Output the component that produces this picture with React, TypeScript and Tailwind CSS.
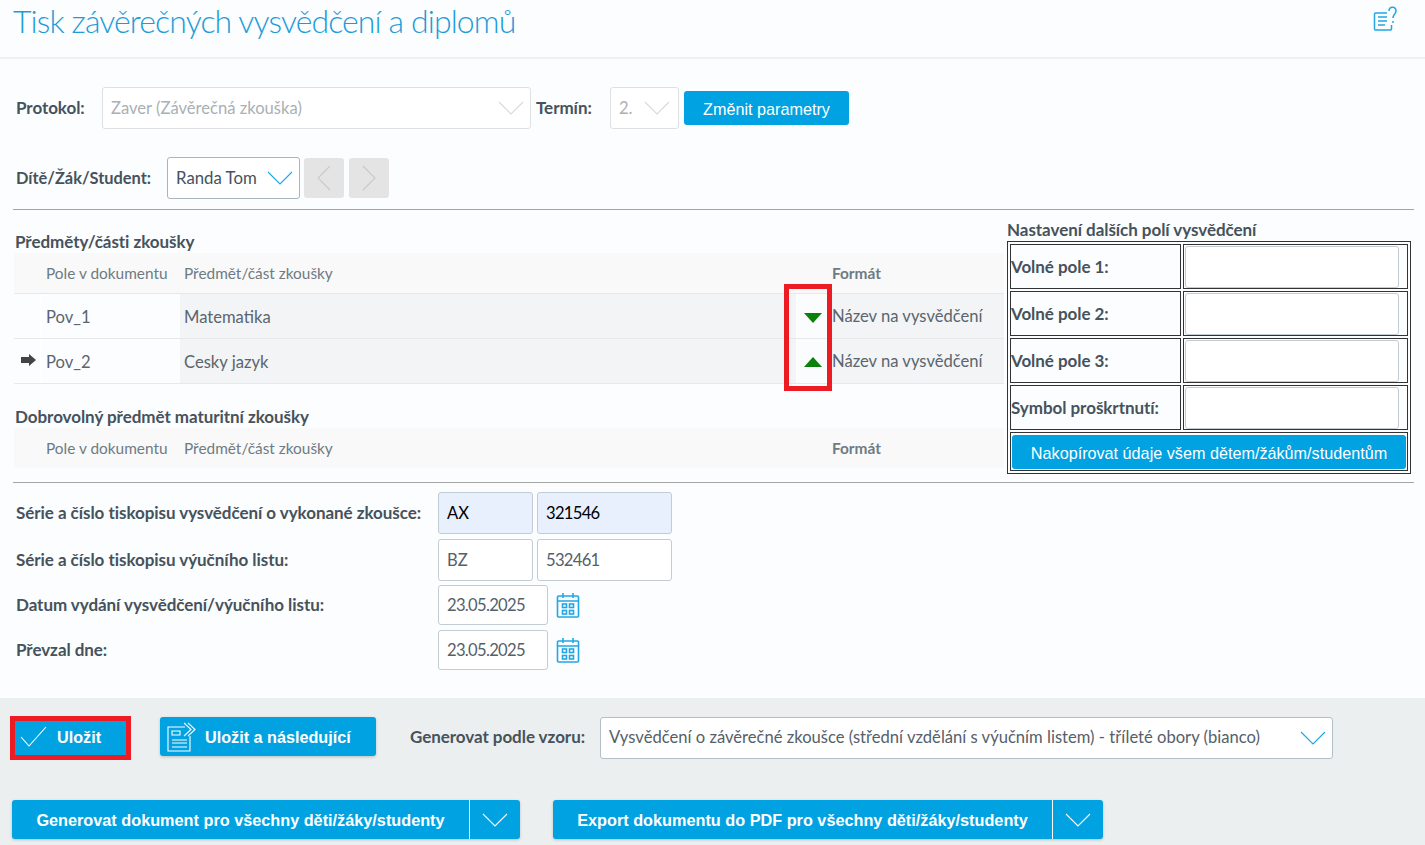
import React from 'react';

const Chevron: React.FC<{ className?: string }> = ({ className = '' }) => (
    <svg width="26" height="14" viewBox="0 0 26 14" fill="none" stroke="currentColor" strokeWidth={1.1} className={className}>
        <path d="M1 1l12 12L25 1" />
    </svg>
);

const CalendarIcon: React.FC = () => (
    <svg width="24" height="26" viewBox="0 0 24 26" fill="none" stroke="#22a7e4" strokeWidth={1.6} className="ml-2">
        <rect x="1.5" y="4" width="21" height="21" rx="1" />
        <path d="M1.5 9h21M7 1v5M17 1v5" />
        <rect x="6.5" y="12" width="4" height="3.5" />
        <rect x="13.5" y="12" width="4" height="3.5" />
        <rect x="6.5" y="18.5" width="4" height="3.5" />
        <rect x="13.5" y="18.5" width="4" height="3.5" />
    </svg>
);

const TextBox: React.FC<{ value?: string; className?: string }> = ({ value, className = '' }) => (
    <div className={`flex items-center rounded-[3px] border border-[#c3ccd2] bg-white px-2 pt-[1px] text-[16.6px] text-[#55606a] ${className}`}>
        {value}
    </div>
);

const FormRow: React.FC<{ label: string; className?: string; children: React.ReactNode }> = ({ label, className = '', children }) => (
    <div className={`flex items-center ${className}`}>
        <div className="w-[422px] text-[17px] font-bold tracking-[-0.05px] text-[#46525c] whitespace-nowrap">{label}</div>
        {children}
    </div>
);

const TableHead: React.FC = () => (
    <div className="flex h-[40px] items-center bg-[#f9f9f9] pt-[1px] text-[15.4px] text-[#6f7b83]">
        <div className="w-[32px]" />
        <div className="w-[138px]">Pole v dokumentu</div>
        <div className="w-[648px]">Předmět/část zkoušky</div>
        <div className="font-bold">Formát</div>
    </div>
);

const SubjectRow: React.FC<{ pole: string; name: string; current?: boolean; up?: boolean }> = ({ pole, name, current, up }) => (
    <div className="flex h-[45px] border-b border-[#e6e8e9] text-[16.6px] text-[#5a656e]">
        <div className="flex w-[28px] items-center justify-center border-r-2 border-white">
            {current && (
                <svg width="15" height="12" viewBox="0 0 15 12" fill="#444444" className="ml-0.5 -mt-[2px]">
                    <path d="M0 3h8V0l7 6-7 6V9H0z" />
                </svg>
            )}
        </div>
        <div className="flex w-[138px] items-center pl-[4px] pt-[2px]">{pole}</div>
        <div className="flex w-[616px] items-center bg-[#f2f4f6] pl-[4px] pt-[2px]">{name}</div>
        <div className="flex w-[36px] items-center justify-end border-l border-white bg-[#fafcfd] pr-[10px]">
            <svg width="18" height="10" viewBox="0 0 18 10" fill="#0a810a" className={up ? 'mt-[1px]' : 'mt-[3px]'}>
                <path d={up ? 'M9 0l9 10H0z' : 'M0 0h18L9 10z'} />
            </svg>
        </div>
        <div className="flex flex-1 items-center bg-[#f2f4f6] pt-[1px] whitespace-nowrap">Název na vysvědčení</div>
    </div>
);

const ExtraField: React.FC<{ label: string }> = ({ label }) => (
    <tr>
        <td className="h-[45px] w-[171px] border border-[#333] text-[17px] font-bold tracking-[-0.05px] text-[#46525c] whitespace-nowrap">{label}</td>
        <td className="border border-[#333] pl-[1px] pr-[8px]">
            <div className="h-[42px] rounded-[3px] border border-[#c3ccd2] bg-white" />
        </td>
    </tr>
);

const SplitButton: React.FC<{ label: string; width: string }> = ({ label, width }) => (
    <div className={`flex h-[39px] overflow-hidden rounded-[3px] bg-[#00a2e2] text-white shadow-[0_1px_3px_rgba(0,0,0,0.2)] ${width}`}>
        <div className="flex flex-1 items-center justify-center border-r border-white pt-[1px] font-['Liberation_Sans',sans-serif] text-[16.25px] font-bold">{label}</div>
        <div className="flex w-[50px] items-center justify-center">
            <Chevron />
        </div>
    </div>
);

export default function App() {
    return (
        <div className="relative h-[845px] w-[1425px] overflow-hidden bg-[#fbfdfe] font-['Lato',sans-serif]">
            {/* Header */}
            <div className="flex h-[59px] items-start justify-between border-b-2 border-[#eef0f1] pl-[13px] pr-[27px]">
                <h1 className="mt-[1px] text-[32px] font-light leading-[40px] tracking-[-0.9px] text-[#1c9cd8]">Tisk závěrečných vysvědčení a diplomů</h1>
                <svg width="25" height="26" viewBox="0 0 25 26" fill="none" stroke="#22a7e4" strokeWidth={1.5} className="mt-[6px]">
                    <path d="M14 7H2.5a1 1 0 0 0-1 1v15a1 1 0 0 0 1 1h15a1 1 0 0 0 1-1v-4" />
                    <path d="M5 11h9M5 15h9M5 19h7" />
                    <path d="M16 5c0-5 7-5 7 0 0 3-3 3-3 7" />
                    <path d="M20 15v2" />
                </svg>
            </div>

            {/* Parameters */}
            <div className="mt-[28px] flex h-[42px] items-center pl-[16px]">
                <div className="w-[86px] text-[17px] font-bold tracking-[-0.05px] text-[#46525c]">Protokol:</div>
                <div className="flex h-[42px] w-[429px] items-center justify-between rounded-[3px] border border-[#dde1e4] bg-white pl-2 pr-[6px] text-[16.6px] text-[#a9b0b6]">
                    <span>Zaver (Závěrečná zkouška)</span>
                    <Chevron className="text-[#d5d9dc]" />
                </div>
                <div className="w-[79px] pl-[5px] text-[17px] font-bold tracking-[-0.05px] text-[#46525c]">Termín:</div>
                <div className="flex h-[42px] w-[69px] items-center justify-between rounded-[3px] border border-[#dde1e4] bg-white pl-2 pr-[8px] text-[16.6px] text-[#a9b0b6]">
                    <span>2.</span>
                    <Chevron className="text-[#d5d9dc]" />
                </div>
                <button className="ml-[5px] h-[34px] w-[165px] rounded-[3px] bg-[#00a2e2] pt-[3px] font-['Liberation_Sans',sans-serif] text-[16.2px] text-white">Změnit parametry</button>
            </div>

            <div className="mt-[28px] flex h-[42px] items-center pl-[16px]">
                <div className="w-[151px] text-[16.4px] font-bold text-[#46525c]">Dítě/Žák/Student:</div>
                <div className="flex h-[42px] w-[133px] items-center justify-between rounded-[3px] border border-[#a9b5bc] bg-white pl-2 pr-[6px] text-[16.8px] text-[#46525c]">
                    <span>Randa Tom</span>
                    <Chevron className="text-[#1ba6e4]" />
                </div>
                <div className="ml-[4px] flex h-[40px] w-[40px] items-center justify-center rounded-[3px] bg-[#e4e4e4]">
                    <svg width="14" height="26" viewBox="0 0 14 26" fill="none" stroke="#c9c9c9" strokeWidth={1.1}><path d="M13 1L1 13l12 12" /></svg>
                </div>
                <div className="ml-[5px] flex h-[40px] w-[40px] items-center justify-center rounded-[3px] bg-[#e4e4e4]">
                    <svg width="14" height="26" viewBox="0 0 14 26" fill="none" stroke="#c9c9c9" strokeWidth={1.1}><path d="M1 1l12 12L1 25" /></svg>
                </div>
            </div>

            <div className="mx-[13px] mt-[10px] w-[1401px] border-t border-[#a5a5a5]" />

            {/* Subjects + extra fields */}
            <div className="flex h-[272px] pl-[14px]">
                <div className="w-[990px] pt-[21px]">
                    <h2 className="h-[22px] pl-[1px] text-[17px] font-bold leading-[21px] tracking-[-0.05px] text-[#46525c]">Předměty/části zkoušky</h2>
                    <div className="border-b border-[#e6e8e9]"><TableHead /></div>
                    <SubjectRow pole="Pov_1" name="Matematika" />
                    <SubjectRow pole="Pov_2" name="Cesky jazyk" current up />
                    <h2 className="mt-[22px] h-[22px] pl-[1px] text-[17px] font-bold leading-[21px] tracking-[-0.05px] text-[#46525c]">Dobrovolný předmět maturitní zkoušky</h2>
                    <TableHead />
                </div>
                <div className="ml-[3px] w-[404px] pt-[9px]">
                    <div className="h-[22px] text-[17px] font-bold leading-[21px] tracking-[-0.05px] text-[#46525c] whitespace-nowrap">Nastavení dalších polí vysvědčení</div>
                    <table className="w-full table-fixed border-separate border-spacing-[2px] border border-[#333]">
                        <tbody>
                            <ExtraField label="Volné pole 1:" />
                            <ExtraField label="Volné pole 2:" />
                            <ExtraField label="Volné pole 3:" />
                            <ExtraField label="Symbol proškrtnutí:" />
                            <tr>
                                <td colSpan={2} className="h-[38px] border border-[#333] p-[1px] pt-[2px]">
                                    <button className="h-[34px] w-full rounded-[3px] bg-[#00a2e2] pt-[2px] font-['Liberation_Sans',sans-serif] text-[16.2px] text-white">Nakopírovat údaje všem dětem/žákům/studentům</button>
                                </td>
                            </tr>
                        </tbody>
                    </table>
                </div>
            </div>

            <div className="mx-[13px] w-[1401px] border-t border-[#a5a5a5]" />

            {/* Document numbers and dates */}
            <div className="pl-[16px] pt-[9px]">
                <FormRow label="Série a číslo tiskopisu vysvědčení o vykonané zkoušce:" className="h-[42px]">
                    <TextBox value="AX" className="h-[42px] w-[95px] !bg-[#e8f0fe] !text-black" />
                    <TextBox value="321546" className="ml-[4px] h-[42px] w-[135px] !bg-[#e8f0fe] tracking-[-0.7px] !text-black" />
                </FormRow>
                <FormRow label="Série a číslo tiskopisu výučního listu:" className="mt-[5px] h-[42px]">
                    <TextBox value="BZ" className="h-[42px] w-[95px]" />
                    <TextBox value="532461" className="ml-[4px] h-[42px] w-[135px] tracking-[-0.7px]" />
                </FormRow>
                <FormRow label="Datum vydání vysvědčení/výučního listu:" className="mt-[4px] h-[40px]">
                    <TextBox value="23.05.2025" className="h-[40px] w-[110px] tracking-[-0.7px]" />
                    <CalendarIcon />
                </FormRow>
                <FormRow label="Převzal dne:" className="mt-[5px] h-[40px]">
                    <TextBox value="23.05.2025" className="h-[40px] w-[110px] tracking-[-0.7px]" />
                    <CalendarIcon />
                </FormRow>
            </div>

            {/* Footer actions */}
            <div className="absolute inset-x-0 bottom-0 h-[147px] bg-[#eceff0] pl-[12px] pt-[19px]">
                <div className="flex h-[42px] items-start">
                    <button className="relative flex h-[39px] w-[118px] items-center rounded-[3px] bg-[#00a2e2] pl-[8px] font-['Liberation_Sans',sans-serif] text-[16.2px] font-bold text-white">
                        <svg width="27" height="21" viewBox="0 0 27 21" fill="none" stroke="white" strokeWidth={1.1}><path d="M1 11l8 9L26 1" /></svg>
                        <span className="ml-[10px] pt-[1px]">Uložit</span>
                        <span className="absolute -left-[2px] -right-[1px] -top-[1px] -bottom-[4px] border-[5px] border-[#ed1c24]" />
                    </button>
                    <button className="ml-[30px] flex h-[39px] w-[216px] items-center rounded-[3px] bg-[#00a2e2] pl-[7px] font-['Liberation_Sans',sans-serif] text-[16.2px] font-bold text-white shadow-[0_1px_3px_rgba(0,0,0,0.2)]">
                        <svg width="30" height="30" viewBox="0 0 30 30" fill="none" stroke="white" strokeWidth={1.1}>
                            <path d="M18 5H1v24h22V14" />
                            <path d="M5 9h8v4H5zM5 18h15M5 21h15M5 25h15" />
                            <path d="M17 1l7 6.5L17 14M21 1l7 6.5L21 14" />
                        </svg>
                        <span className="ml-[8px] pt-[1px]">Uložit a následující</span>
                    </button>
                    <div className="ml-[34px] w-[190px] pt-[7px] text-[17px] font-bold tracking-[-0.05px] text-[#46525c] whitespace-nowrap">Generovat podle vzoru:</div>
                    <div className="flex h-[42px] w-[733px] items-center justify-between rounded-[3px] border border-[#b5bfc5] bg-white pl-2 pr-[6px] text-[16.6px] text-[#55606a] whitespace-nowrap">
                        <span className="pb-[1px]">Vysvědčení o závěrečné zkoušce (střední vzdělání s výučním listem) - tříleté obory (bianco)</span>
                        <Chevron className="text-[#1ba6e4]" />
                    </div>
                </div>
                <div className="mt-[41px] flex gap-[33px]">
                    <SplitButton label="Generovat dokument pro všechny děti/žáky/studenty" width="w-[508px]" />
                    <SplitButton label="Export dokumentu do PDF pro všechny děti/žáky/studenty" width="w-[550px]" />
                </div>
            </div>

            {/* Red highlight around the order arrows */}
            <div className="absolute left-[784px] top-[284px] h-[107px] w-[48px] border-[5px] border-[#ed1c24]" />
        </div>
    );
}
